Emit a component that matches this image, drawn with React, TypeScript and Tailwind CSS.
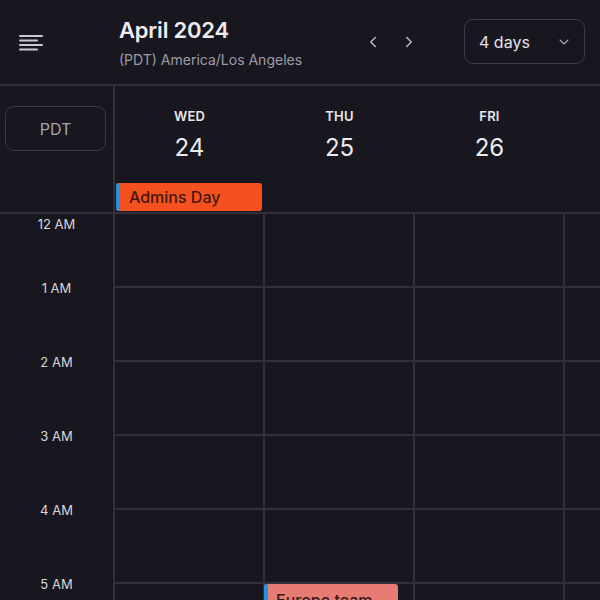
import { ChevronDown, ChevronLeft, ChevronRight } from "lucide-react";

const days = [
  { name: "WED", num: 24 },
  { name: "THU", num: 25 },
  { name: "FRI", num: 26 },
];

const hours = [
  { label: "12 AM", top: "top-[11px]" },
  { label: "1 AM", top: "top-[75px]" },
  { label: "2 AM", top: "top-[149px]" },
  { label: "3 AM", top: "top-[223px]" },
  { label: "4 AM", top: "top-[297px]" },
  { label: "5 AM", top: "top-[371px]" },
];

const rows = [0, 1, 2, 3, 4, 5];
const cols = [0, 1, 2, 3];

const MenuIcon = () => (
  <svg width="24" height="16" viewBox="0 0 24 16" fill="none">
    <rect x="0" y="0" width="24" height="2" rx="1" fill="#c9c8d0" />
    <rect x="0" y="4.5" width="19" height="2" rx="1" fill="#c9c8d0" />
    <rect x="0" y="9" width="24" height="2" rx="1" fill="#c9c8d0" />
    <rect x="0" y="13.5" width="19" height="2" rx="1" fill="#c9c8d0" />
  </svg>
);

export default function App() {
  return (
    <div
      className="w-[600px] h-[600px] overflow-hidden bg-[#18171f] text-[#e4e3e8]"
      style={{ fontFamily: "Inter, 'Noto Sans', sans-serif" }}
    >
      {/* top bar */}
      <header className="h-[86px] flex items-center border-b-2 border-[#302f3a]">
        <div className="w-[119px] pl-[19px] pt-[2px] shrink-0">
          <MenuIcon />
        </div>
        <div className="flex flex-col w-[245px] shrink-0 mt-[2px]">
          <h1 className="text-[22px] font-semibold leading-7 tracking-[-0.2px] text-[#ececf0]">April 2024</h1>
          <p className="text-[14px] leading-5 mt-[6px] text-[#9d9ca6]">(PDT) America/Los Angeles</p>
        </div>
        <div className="flex items-center gap-[18px] text-[#b9b8c1]">
          <ChevronLeft size={18} strokeWidth={2} />
          <ChevronRight size={18} strokeWidth={2} />
        </div>
        <div className="ml-[46px] w-[121px] h-[45px] rounded-[9px] border border-[#3b3a47] flex items-center justify-between pl-[14px] pr-[12px] -mt-[1px]">
          <span className="text-[16px] text-[#e2e1e7]">4 days</span>
          <ChevronDown size={16} strokeWidth={1.6} className="text-[#a9a8b1]" />
        </div>
      </header>

      <div className="flex">
        {/* left gutter */}
        <div className="w-[115px] shrink-0 border-r-2 border-[#302f3a]">
          <div className="h-[128px] border-b-2 border-[#302f3a] pt-[20px] pl-[5px]">
            <div className="w-[101px] h-[45px] rounded-[9px] border border-[#3b3a47] flex items-center justify-center text-[16px] text-[#a4a3ac]">
              PDT
            </div>
          </div>
          <div className="relative h-[460px]">
            {hours.map((h) => (
              <div
                key={h.label}
                className={`absolute left-0 w-full -translate-y-1/2 text-center text-[13px] text-[#d6d5dc] ${h.top}`}
              >
                {h.label}
              </div>
            ))}
          </div>
        </div>

        {/* day columns */}
        <div className="flex-1 overflow-hidden">
          <div className="flex h-[128px] border-b-2 border-[#302f3a] w-[600px]">
            {days.map((d, i) => (
              <div key={d.name} className="w-[150px] shrink-0 flex flex-col">
                <div className="flex flex-col items-center pt-[22px] pr-[1px]">
                  <span className="text-[13px] font-semibold tracking-[0.2px] text-[#e8e7ec] leading-4">{d.name}</span>
                  <span className="text-[24px] leading-8 mt-[8px] text-[#ecebef]">{d.num}</span>
                </div>
                {i === 0 && (
                  <div className="mt-auto mb-[1px] ml-[1px] w-[146px] h-[28px] rounded-[3px] bg-[#f4511e] flex items-center overflow-hidden">
                    <div className="w-[4px] h-full bg-[#1e95e0]" />
                    <span className="ml-[9px] text-[16px] font-medium text-[#45170d]">Admins Day</span>
                  </div>
                )}
              </div>
            ))}
          </div>
          <div className="flex w-[600px]">
            {cols.map((c) => (
              <div key={c} className="w-[150px] shrink-0 border-r-2 border-[#302f3a]">
                {rows.map((r) => (
                  <div key={r} className="h-[74px] border-b-2 border-[#302f3a]">
                    {c === 1 && r === 5 && (
                      <div className="-ml-[1px] w-[134px] h-[40px] rounded-[3px] bg-[#e67c73] flex overflow-hidden">
                        <div className="w-[4px] h-full bg-[#1e95e0]" />
                        <span className="ml-[8px] mt-[4px] text-[16px] font-medium text-[#3a1815]">Europe team</span>
                      </div>
                    )}
                  </div>
                ))}
              </div>
            ))}
          </div>
        </div>
      </div>
    </div>
  );
}
